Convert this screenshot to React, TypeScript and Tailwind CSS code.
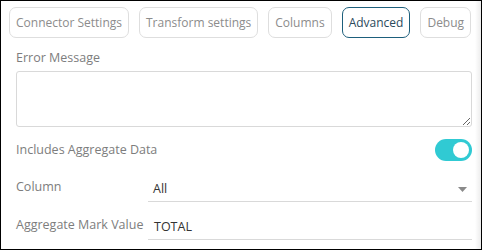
import React from 'react';

const tabs = ['Connector Settings', 'Transform settings', 'Columns', 'Advanced', 'Debug'];

const App: React.FC = () => {
  return (
    <div className="w-[482px] h-[250px] border border-black bg-white flex font-['Open_Sans',sans-serif] text-[12.5px] overflow-hidden whitespace-nowrap">
      <div className="flex-1 flex flex-col pl-[15px] pr-[3px] min-w-0">
        <div className="flex gap-[10px] -ml-[7px] mt-[6px] text-[12px]">
          {tabs.map((tab) => (
            <div
              key={tab}
              className={
                tab === 'Advanced'
                  ? 'shrink-0 h-[31px] px-[6px] flex items-center rounded-[7px] border border-[#1d5f7c] text-[#2b4a5c]'
                  : 'shrink-0 h-[31px] px-[6px] flex items-center rounded-[7px] border border-[#dedede] text-[#8c8c8c]'
              }
            >
              {tab}
            </div>
          ))}
        </div>

        <div className="mt-[10px] text-[#7d7d7d] leading-[20px]">Error Message</div>
        <textarea className="mt-[3px] h-[56px] w-full border border-[#d9d9d9] rounded-[3px] resize-y outline-none" />

        <div className="mt-[12px] flex items-center justify-between h-[22px]">
          <span className="text-[#7d7d7d]">Includes Aggregate Data</span>
          <div className="w-[37px] h-[22px] rounded-full bg-[#30cad3] flex items-center justify-end pr-[3px]">
            <div className="w-[16px] h-[16px] rounded-full bg-white" />
          </div>
        </div>

        <div className="mt-[16px] flex items-end h-[25px]">
          <span className="w-[132px] shrink-0 text-[#7d7d7d] pb-[5px]">Column</span>
          <div className="flex-1 h-full flex items-center justify-between border-b border-[#d9d9d9] pl-[5px] pr-[5px]">
            <span className="text-[#333]">All</span>
            <svg width="9" height="5" viewBox="0 0 9 5" className="mt-[1px]">
              <path d="M0 0 L9 0 L4.5 5 Z" fill="#8a8a8a" />
            </svg>
          </div>
        </div>

        <div className="mt-[13px] flex items-end h-[25px]">
          <span className="w-[132px] shrink-0 text-[#7d7d7d] pb-[5px]">Aggregate Mark Value</span>
          <div className="flex-1 h-full flex items-center border-b border-[#d9d9d9] pl-[6px]">
            <span className="text-[#333]">TOTAL</span>
          </div>
        </div>
      </div>
      <div className="w-[6px] h-full bg-gradient-to-r from-white to-[#ececec]" />
    </div>
  );
};

export default App;
